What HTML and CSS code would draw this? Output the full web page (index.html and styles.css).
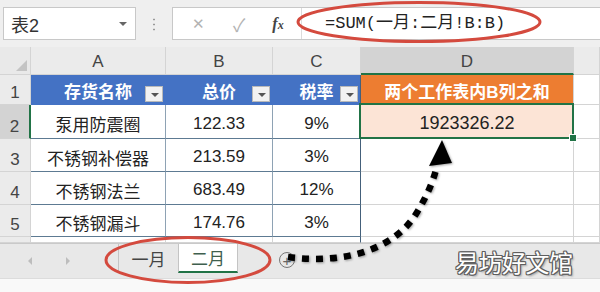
FILE: index.html
```html
<!DOCTYPE html>
<html lang="zh-CN">
<head>
    <meta charset="UTF-8">
    <title>两个工作表内B列之和</title>
    <link rel="stylesheet" href="styles.css">
</head>
<body>
    <div class="formula-bar">
        <div class="name-box">
            <span>表2</span>
            <span class="caret"></span>
        </div>
        <div class="grip"></div>
        <div class="formula-box">
            <div class="fx-buttons">
                <span class="btn-x">✕</span>
                <span class="btn-ok">✓</span>
                <span class="btn-fx"><i>f</i><i class="sub">x</i></span>
            </div>
            <div class="formula-text">=SUM(一月:二月!B:B)</div>
        </div>
    </div>

    <div class="sheet">
        <div class="corner"></div>
        <div class="col-head">A</div>
        <div class="col-head">B</div>
        <div class="col-head">C</div>
        <div class="col-head active">D</div>
        <div class="col-head"></div>

        <div class="row-head">1</div>
        <div class="cell th">存货名称<span class="filter"></span></div>
        <div class="cell th">总价<span class="filter"></span></div>
        <div class="cell th last">税率<span class="filter"></span></div>
        <div class="cell th-sum">两个工作表内B列之和</div>
        <div class="cell"></div>

        <div class="row-head active">2</div>
        <div class="cell td">泵用防震圈</div>
        <div class="cell td">122.33</div>
        <div class="cell td last">9%</div>
        <div class="cell sum">1923326.22</div>
        <div class="cell"></div>

        <div class="row-head">3</div>
        <div class="cell td">不锈钢补偿器</div>
        <div class="cell td">213.59</div>
        <div class="cell td last">3%</div>
        <div class="cell"></div>
        <div class="cell"></div>

        <div class="row-head">4</div>
        <div class="cell td">不锈钢法兰</div>
        <div class="cell td">683.49</div>
        <div class="cell td last">12%</div>
        <div class="cell"></div>
        <div class="cell"></div>

        <div class="row-head">5</div>
        <div class="cell td">不锈钢漏斗</div>
        <div class="cell td">174.76</div>
        <div class="cell td last">3%</div>
        <div class="cell"></div>
        <div class="cell"></div>

        <div class="row-head"></div>
        <div class="cell"></div>
        <div class="cell"></div>
        <div class="cell last"></div>
        <div class="cell"></div>
        <div class="cell"></div>
    </div>

    <div class="tab-bar">
        <div class="nav">
            <span class="nav-left"></span>
            <span class="nav-right"></span>
        </div>
        <div class="tab">一月</div>
        <div class="tab current">二月</div>
        <div class="add-sheet">+</div>
    </div>
    <div class="status-bar"></div>

    <div class="watermark">易坊好文馆</div>

    <svg class="marks" width="600" height="292" viewBox="0 0 600 292">
        <ellipse cx="419" cy="22" rx="121" ry="19.5" fill="none" stroke="#d44a3e" stroke-width="3"/>
        <ellipse cx="188" cy="260" rx="82" ry="22.5" fill="none" stroke="#d44a3e" stroke-width="3"/>
        <g class="arrow">
            <path d="M288 257 C340 264 392 252 416 214 C427 196 433 182 437 166" fill="none" stroke="#000" stroke-width="6.5" stroke-dasharray="7 7"/>
            <polygon points="442,140 429,166 452,163" fill="#000"/>
        </g>
    </svg>
</body>
</html>
```

FILE: styles.css
```css
body {
    margin: 0;
    width: 600px;
    height: 292px;
    overflow: hidden;
    position: relative;
    background: #fff;
    font-family: 'Liberation Sans', 'Noto Sans CJK SC', sans-serif;
    color: #222;
}

/* formula bar */
.formula-bar {
    height: 47px;
    background: #efefef;
    display: flex;
    align-items: flex-start;
    padding-top: 7px;
    box-sizing: border-box;
}
.name-box {
    margin-left: 3px;
    width: 133px;
    height: 33px;
    background: #fff;
    border: 1px solid #c8c8c8;
    box-sizing: border-box;
    display: flex;
    align-items: center;
    justify-content: space-between;
    padding: 0 8px 0 7px;
    font-size: 18px;
    color: #333;
}
.caret {
    width: 0;
    height: 0;
    border-left: 4px solid transparent;
    border-right: 4px solid transparent;
    border-top: 4px solid #666;
}
.grip {
    width: 2px;
    height: 14px;
    margin: 10px 17px 0 17px;
    background: radial-gradient(circle, #999 0.8px, transparent 1.2px) 0 0 / 2px 5px repeat-y;
}
.formula-box {
    flex: 1;
    height: 33px;
    background: #fff;
    border: 1px solid #c8c8c8;
    border-right: none;
    box-sizing: border-box;
    display: flex;
}
.fx-buttons {
    width: 129px;
    display: flex;
    align-items: center;
    border-right: 1px solid #dcdcdc;
    box-sizing: border-box;
}
.btn-x {
    margin-left: 19px;
    color: #b3b3b3;
    font-size: 15px;
}
.btn-ok {
    margin-left: 28px;
    color: #b3b3b3;
    font-size: 18px;
}
.btn-fx {
    margin-left: 27px;
    font-family: 'Liberation Serif', serif;
    font-size: 16px;
    font-weight: bold;
    color: #444;
}
.btn-fx .sub {
    font-size: 12px;
}
.formula-text {
    padding-left: 23px;
    line-height: 31px;
    font-family: 'Liberation Mono', 'Noto Sans CJK SC', monospace;
    font-size: 17px;
    color: #222;
}

/* sheet grid */
.sheet {
    display: grid;
    grid-template-columns: 31px 135px 107px 88px 213px 1fr;
    grid-template-rows: 28px 30px 34px 33px 33px 32px 6px;
}
.sheet > div {
    box-sizing: border-box;
    border-right: 1px solid #d4d4d4;
    border-bottom: 1px solid #d4d4d4;
}
.corner {
    background: #e9e9e9;
    position: relative;
}
.corner::after {
    content: '';
    position: absolute;
    right: 3px;
    bottom: 3px;
    border-left: 11px solid transparent;
    border-bottom: 11px solid #c4c4c4;
}
.col-head {
    background: #ebebeb;
    text-align: center;
    font-size: 17px;
    color: #444;
    line-height: 29px;
}
.col-head.active {
    background: #d3d3d3;
    border-bottom: 2px solid #217346 !important;
}
.row-head {
    background: #ebebeb;
    text-align: center;
    font-size: 17px;
    color: #444;
    display: flex;
    align-items: flex-end;
    justify-content: center;
    padding-bottom: 1px;
}
.row-head.active {
    background: #d3d3d3;
    border-right: 2px solid #217346 !important;
}
.cell {
    display: flex;
    align-items: center;
    justify-content: center;
    font-size: 17px;
    position: relative;
}
.th {
    background: #4472c4;
    color: #fff;
    font-weight: bold;
    border-color: #4472c4 !important;
    padding-top: 2px;
}
.filter {
    position: absolute;
    right: 2px;
    bottom: 2px;
    width: 18px;
    height: 16px;
    background: #f2f2f2;
    border: 1px solid #b9b9b9;
    box-sizing: border-box;
}
.filter::after {
    content: '';
    position: absolute;
    left: 5px;
    top: 6px;
    border-left: 4px solid transparent;
    border-right: 4px solid transparent;
    border-top: 4px solid #555;
}
.td {
    padding-top: 4px;
    border-bottom-color: #5d7a92 !important;
    border-right-color: #8ea2b4 !important;
}
.last {
    border-right-color: #44607a !important;
}
.th-sum {
    background: #ed7d31;
    color: #fff;
    font-weight: bold;
    padding-top: 2px;
}
.sum {
    background: #fce4d6;
    font-size: 18px;
    padding-top: 4px;
}
.sum::after {
    content: '';
    position: absolute;
    left: -2px;
    top: -2px;
    right: -1px;
    bottom: -1px;
    border: 2px solid #217346;
}
.sum::before {
    content: '';
    position: absolute;
    right: -4px;
    bottom: -4px;
    width: 6px;
    height: 6px;
    background: #217346;
    border: 1px solid #fff;
    z-index: 1;
}

/* sheet tabs */
.tab-bar {
    height: 35px;
    background: #e8e8e8;
    border-top: 1px solid #c9c9c9;
    box-sizing: border-box;
    display: flex;
    align-items: stretch;
}
.nav {
    width: 118px;
    display: flex;
    align-items: center;
}
.nav-left {
    margin-left: 28px;
    border-top: 4px solid transparent;
    border-bottom: 4px solid transparent;
    border-right: 4px solid #bdbdbd;
}
.nav-right {
    margin-left: 34px;
    border-top: 4px solid transparent;
    border-bottom: 4px solid transparent;
    border-left: 4px solid #bdbdbd;
}
.tab {
    width: 60px;
    margin-bottom: 5px;
    border-left: 1px solid #c4c4c4;
    box-sizing: border-box;
    display: flex;
    align-items: center;
    justify-content: center;
    font-size: 17px;
    color: #444;
}
.tab.current {
    background: #fff;
    border-right: 1px solid #c4c4c4;
    border-bottom: 2px solid #217346;
    color: #3f5f4e;
}
.add-sheet {
    width: 16px;
    height: 16px;
    margin: 8px 0 0 41px;
    border: 1px solid #777;
    border-radius: 50%;
    box-sizing: border-box;
    display: flex;
    align-items: center;
    justify-content: center;
    font-size: 15px;
    line-height: 1;
    color: #666;
}
.status-bar {
    height: 14px;
    background: #f9f9f9;
    border-top: 1px solid #dcdcdc;
    box-sizing: border-box;
}

/* overlays */
.watermark {
    position: absolute;
    left: 455px;
    top: 244px;
    font-family: 'Noto Sans CJK SC', sans-serif;
    font-size: 24px;
    letter-spacing: -0.5px;
    color: #fff;
    text-shadow:
        1px 0 0 #5e5e5e, -1px 0 0 #5e5e5e,
        0 1px 0 #5e5e5e, 0 -1px 0 #5e5e5e,
        1px 1px 0 #5e5e5e, -1px -1px 0 #5e5e5e,
        1px -1px 0 #5e5e5e, -1px 1px 0 #5e5e5e,
        2px 2px 2px rgba(0, 0, 0, 0.3);
}
.marks {
    position: absolute;
    left: 0;
    top: 0;
    pointer-events: none;
}
.arrow {
    filter: drop-shadow(1px 1px 1px rgba(0, 0, 0, 0.35));
}
```
